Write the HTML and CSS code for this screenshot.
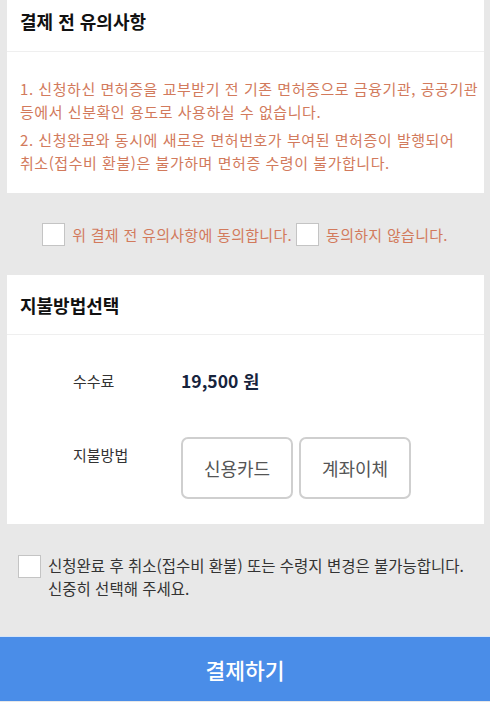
FILE: index.html
```html
<!DOCTYPE html>
<html lang="ko">
<head>
    <meta charset="UTF-8">
    <meta name="viewport" content="width=device-width, initial-scale=1.0">
    <title>결제</title>
    <link rel="stylesheet" href="styles.css">
</head>
<body>
    <div class="page">
        <div class="card">
            <h2 class="card-title first">결제 전 유의사항</h2>
            <div class="notice">
                <p>1. 신청하신 면허증을 교부받기 전 기존 면허증으로 금융기관, 공공기관 등에서 신분확인 용도로 사용하실 수 없습니다.</p>
                <p>2. 신청완료와 동시에 새로운 면허번호가 부여된 면허증이 발행되어 취소(접수비 환불)은 불가하며 면허증 수령이 불가합니다.</p>
            </div>
        </div>

        <div class="agree">
            <label class="check"><input type="checkbox"> 위 결제 전 유의사항에 동의합니다.</label>
            <label class="check"><input type="checkbox"> 동의하지 않습니다.</label>
        </div>

        <div class="card">
            <h2 class="card-title">지불방법선택</h2>
            <div class="pay-grid">
                <span class="pay-label">수수료</span>
                <span class="fee">19,500 원</span>
                <span class="pay-label top">지불방법</span>
                <div class="methods">
                    <button type="button" class="method">신용카드</button>
                    <button type="button" class="method">계좌이체</button>
                </div>
            </div>
        </div>

        <div class="confirm">
            <input type="checkbox">
            <p>신청완료 후 취소(접수비 환불) 또는 수령지 변경은 불가능합니다.<br>신중히 선택해 주세요.</p>
        </div>

        <button type="button" class="submit">결제하기</button>
    </div>
</body>
</html>
```

FILE: styles.css
```css
body {
    margin: 0;
    padding: 0;
    font-family: "Noto Sans CJK KR", "Noto Sans", sans-serif;
    background-color: #e8e8e8;
    color: #333;
}

.page {
    width: 490px;
    height: 702px;
    display: flex;
    flex-direction: column;
    overflow: hidden;
}

.card {
    background-color: #fff;
    margin: 0 6px 0 7px;
}

.card-title {
    margin: 0;
    height: 60px;
    box-sizing: border-box;
    padding: 0 13px;
    display: flex;
    align-items: center;
    font-size: 18px;
    font-weight: bold;
    color: #111;
    border-bottom: 1px solid #efefef;
}

.card-title.first {
    height: 52px;
    padding-bottom: 10px;
}

.notice {
    padding: 26px 4px 19px 13px;
    color: #d27a5c;
    font-size: 15px;
    letter-spacing: 0.55px;
    line-height: 22.5px;
    word-break: keep-all;
}

.notice p {
    margin: 0;
}

.notice p + p {
    margin-top: 6px;
}

.agree {
    height: 82px;
    display: flex;
    justify-content: center;
    align-items: center;
    gap: 4px;
    color: #d27a5c;
    font-size: 15px;
    letter-spacing: 0.3px;
}

.check {
    display: flex;
    align-items: center;
    gap: 7px;
}

input[type="checkbox"] {
    appearance: none;
    -webkit-appearance: none;
    width: 23px;
    height: 23px;
    margin: 0;
    background-color: #fff;
    border: 1px solid #c4c4c4;
    flex-shrink: 0;
}

.pay-grid {
    display: grid;
    grid-template-columns: 108px auto;
    row-gap: 44px;
    padding: 34px 0 25px 66px;
    align-items: center;
}

.pay-label {
    font-size: 15px;
    line-height: 24px;
    color: #333;
}

.pay-label.top {
    align-self: start;
    margin-top: 6px;
}

.fee {
    font-size: 17.5px;
    font-weight: bold;
    line-height: 24px;
    color: #17243d;
}

.methods {
    display: flex;
    gap: 6px;
}

.method {
    width: 112px;
    height: 62px;
    background-color: #fff;
    border: 2px solid #cfcfcf;
    border-radius: 7px;
    font-family: inherit;
    font-size: 18px;
    color: #555;
    padding: 0;
}

.confirm {
    height: 112px;
    box-sizing: border-box;
    display: flex;
    align-items: flex-start;
    gap: 7px;
    padding: 31px 18px 0;
}

.confirm p {
    margin: -1px 0 0;
    font-size: 15.5px;
    line-height: 23px;
    color: #333;
}

.submit {
    width: 100%;
    height: 65px;
    border: none;
    border-top: 1px solid #d5e4f7;
    background-color: #4a8de8;
    color: #fff;
    font-family: inherit;
    font-size: 21.5px;
    font-weight: 500;
    padding: 0;
}
```
